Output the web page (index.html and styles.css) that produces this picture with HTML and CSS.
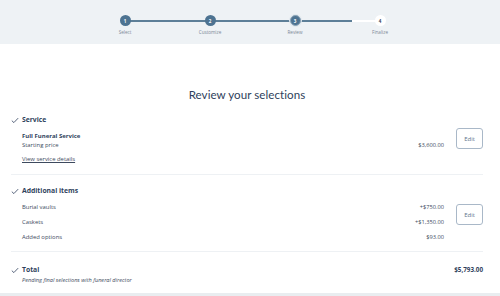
FILE: index.html
```html
<!DOCTYPE html>
<html>
<head>
<meta charset="utf-8">
<link rel="stylesheet" href="styles.css">
</head>
<body>
<header class="stepbar">
  <ol class="steps">
    <li class="step done"><span class="dot">1</span><span class="label">Select</span></li>
    <li class="step done"><span class="dot">2</span><span class="label">Customize</span></li>
    <li class="step current"><span class="dot">3</span><span class="label">Review</span></li>
    <li class="step todo"><span class="dot">4</span><span class="label">Finalize</span></li>
  </ol>
</header>
<main class="main">
  <h1 class="title">Review your selections</h1>

  <section class="sec service">
    <div class="sec-head">
      <svg class="check" viewBox="0 0 10 8"><path d="M1 4.2 L3.6 6.6 L9 1" fill="none" stroke="#2f3f5c" stroke-width="1"/></svg>
      <span>Service</span>
    </div>
    <div class="sec-body">
      <div class="rows">
        <div class="pkg">Full Funeral Service</div>
        <div class="row"><span>Starting price</span><span class="price">$3,600.00</span></div>
        <a class="link" href="#">View service details</a>
      </div>
      <button class="edit">Edit</button>
    </div>
  </section>

  <section class="sec items">
    <div class="sec-head">
      <svg class="check" viewBox="0 0 10 8"><path d="M1 4.2 L3.6 6.6 L9 1" fill="none" stroke="#2f3f5c" stroke-width="1"/></svg>
      <span>Additional items</span>
    </div>
    <div class="sec-body">
      <div class="rows">
        <div class="row item"><span>Burial vaults</span><span class="price">+$750.00</span></div>
        <div class="row item"><span>Caskets</span><span class="price">+$1,350.00</span></div>
        <div class="row item"><span>Added options</span><span class="price">$93.00</span></div>
      </div>
      <button class="edit">Edit</button>
    </div>
  </section>

  <section class="sec total">
    <div class="sec-head">
      <svg class="check" viewBox="0 0 10 8"><path d="M1 4.2 L3.6 6.6 L9 1" fill="none" stroke="#2f3f5c" stroke-width="1"/></svg>
      <span>Total</span>
      <span class="total-amt">$5,793.00</span>
    </div>
    <div class="note">Pending final selections with funeral director</div>
  </section>
</main>
<div class="footband"></div>
</body>
</html>
```
FILE: styles.css
```css
* { box-sizing: border-box; }
html, body { margin: 0; padding: 0; }
body {
  width: 500px;
  height: 296px;
  overflow: hidden;
  background: #ffffff;
  font-family: "Open Sans", "Liberation Sans", sans-serif;
  color: #2f3f5c;
  display: flex;
  flex-direction: column;
}
.stepbar {
  background: #eef2f5;
  height: 44px;
  flex: none;
  display: flex;
  justify-content: center;
  padding-top: 15px;
}
.steps {
  list-style: none;
  margin: 0 0 0 5px;
  padding: 0;
  display: flex;
}
.step {
  width: 85px;
  display: flex;
  flex-direction: column;
  align-items: center;
  position: relative;
}
.step::after {
  content: "";
  position: absolute;
  top: 5px;
  left: 50%;
  width: 85px;
  height: 2px;
  background: #5d7f98;
}
.step:last-child::after { display: none; }
.step.current::after {
  background: linear-gradient(to right, #5d7f98 0, #5d7f98 67%, #ffffff 67%);
}
.dot {
  position: relative;
  z-index: 1;
  width: 11px;
  height: 11px;
  border-radius: 50%;
  background: #4d7391;
  color: #fff;
  font-size: 4.5px;
  font-weight: 700;
  display: flex;
  align-items: center;
  justify-content: center;
}
.step.current .dot {
  border: 1px solid #8aa3b6;
  box-shadow: 0 0 0 1px #dfe7ed;
}
.step.todo .dot {
  background: #ffffff;
  color: #2f3f5c;
}
.label {
  margin-top: 3px;
  font-size: 4.6px;
  color: #7b8795;
}
.main {
  flex: 1;
  padding: 0 17px 0 11px;
  min-height: 0;
}
.title {
  margin: 0;
  padding-top: 43px;
  height: 71px;
  line-height: 16px;
  text-align: center;
  font-family: "Lato", "Open Sans", sans-serif;
  font-size: 11.6px;
  font-weight: 400;
  color: #2f3f5c;
  letter-spacing: 0.05px;
}
.sec {
  border-bottom: 1px solid #eef1f4;
}
.sec-head {
  display: flex;
  align-items: center;
  font-size: 6.8px;
  font-weight: 700;
  height: 10px;
  line-height: 10px;
}
.check {
  width: 8px;
  height: 7px;
  margin-right: 3px;
}
.sec-body {
  display: flex;
  align-items: flex-start;
  padding-left: 11px;
}
.rows { flex: 1; }
.pkg {
  font-size: 6px;
  font-weight: 700;
  line-height: 9px;
}
.row {
  display: flex;
  justify-content: space-between;
  font-size: 5.9px;
  line-height: 9px;
  color: #3d4a5e;
}
.price {
  font-size: 5.7px;
  margin-right: 12px;
}
.link {
  display: block;
  margin-top: 4.5px;
  font-size: 5.9px;
  line-height: 9px;
  color: #3d4a5e;
  text-decoration: underline;
}
.edit {
  width: 27px;
  height: 21px;
  border: 1px solid #a9b8c8;
  border-radius: 3px;
  background: #fff;
  color: #5d738b;
  font-family: inherit;
  font-size: 6px;
  padding: 0;
  flex: none;
}
.service .sec-body { margin-top: 7px; }
.service .edit { margin-top: -4px; }
.service { padding-bottom: 10.5px; margin-bottom: 11px; }
.items .sec-body { margin-top: 3.5px; }
.items .row.item { line-height: 15px; }
.items .edit { margin-top: 4.5px; }
.items { padding-bottom: 6.5px; margin-bottom: 13px; }
.total { border-bottom: none; }
.total-amt {
  margin-left: auto;
  font-size: 6.3px;
  font-weight: 700;
}
.note {
  padding-left: 11px;
  font-size: 5.6px;
  line-height: 8px;
  font-style: italic;
  color: #3d4a5e;
  margin-top: 1px;
}
.footband {
  height: 3px;
  flex: none;
  background: #e9edf0;
}
```
